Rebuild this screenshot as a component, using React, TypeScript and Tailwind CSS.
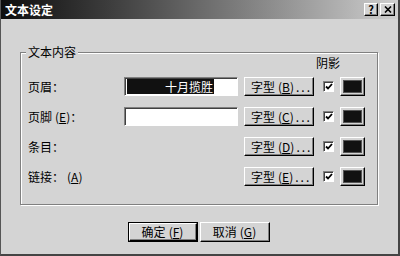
import React from 'react'

const raised = "border-t border-l border-t-white border-l-white border-b border-r border-b-black border-r-black shadow-[inset_-1px_-1px_0_#808080]"
const sunken = "border-t border-l border-t-[#808080] border-l-[#808080] border-b border-r border-b-white border-r-white shadow-[inset_1px_1px_0_#404040]"

const Key = ({ k }: { k: string }) => (
  <span className="ml-[3px]">(<span className="underline">{k}</span>)</span>
)

const Check = () => (
  <div className={`w-[11px] h-[11px] bg-white flex items-center justify-center ${sunken}`}>
    <svg width="8" height="7" viewBox="0 0 8 7">
      <path d="M1 3.5 L3 5.5 L7 1" stroke="#000" strokeWidth="1.8" fill="none" />
    </svg>
  </div>
)

const Swatch = () => (
  <div className={`w-[25px] h-[19px] bg-[#d4d4d4] flex items-center justify-center ${raised}`}>
    <div className="w-[19px] h-[13px] bg-[#111] border border-[#555]" />
  </div>
)

const FontBtn = ({ k }: { k: string }) => (
  <div className={`w-[70px] h-[19px] flex items-center pl-[6px] ${raised}`}>
    字型<Key k={k} /><span className="ml-[2px] tracking-[2px]">...</span>
  </div>
)

type Row = { label: React.ReactNode; input?: 'sel' | 'empty'; k: string }

const rows: Row[] = [
  { label: <>页眉：</>, input: 'sel', k: 'B' },
  { label: <>页脚<Key k="E" />：</>, input: 'empty', k: 'C' },
  { label: <>条目：</>, k: 'D' },
  { label: <>链接：<Key k="A" /></>, k: 'E' },
]

export default function App() {
  return (
    <div
      className="w-[400px] h-[256px] bg-[#d4d4d4] border-l border-l-[#555] border-r-2 border-r-[#444] border-b-2 border-b-[#444] flex flex-col text-[12px] leading-[14px] text-black overflow-hidden"
      style={{ fontFamily: '"Noto Sans CJK SC", "Noto Sans", sans-serif' }}
    >
      {/* title bar */}
      <div className="h-[19px] bg-linear-to-r from-[#0e0e0e] via-[#6a6a6a] to-[#cfcfcf] flex items-center pl-[4px] pr-[3px] shrink-0">
        <span className="text-white font-bold text-[12px]">文本设定</span>
        <div className="ml-auto flex gap-[2px]">
          <div className={`w-[14px] h-[13px] bg-[#d4d4d4] flex items-center justify-center font-bold text-[11px] leading-none ${raised}`}>?</div>
          <div className={`w-[15px] h-[13px] bg-[#d4d4d4] flex items-center justify-center ${raised}`}>
            <svg width="8" height="7" viewBox="0 0 8 7">
              <path d="M1 0.5 L7 6.5 M7 0.5 L1 6.5" stroke="#000" strokeWidth="1.6" />
            </svg>
          </div>
        </div>
      </div>

      {/* group box */}
      <div className="relative ml-[19px] mt-[33px] w-[358px] h-[153px] border border-[#808080] shadow-[1px_1px_0_#fff,inset_1px_1px_0_#fff]">
        <span className="absolute left-[5px] -top-[8px] px-[2px] bg-[#d4d4d4]">文本内容</span>
        <div className="pl-[295px] pt-[3px] h-[17px]">阴影</div>
        <div className="flex flex-col gap-[11px] mt-[7px] pl-[7px]">
          {rows.map((r, i) => (
            <div key={i} className="flex items-center h-[19px]">
              <div className="w-[96px]">{r.label}</div>
              <div className="w-[114px] h-[19px]">
                {r.input && (
                  <div className={`w-full h-full bg-white flex items-center pl-[2px] ${sunken}`}>
                    {r.input === 'sel' && (
                      <span className="w-[87px] h-[15px] bg-[#111] text-white text-right leading-[15px] pr-[1px]">十月揽胜</span>
                    )}
                  </div>
                )}
              </div>
              <div className="ml-[6px]"><FontBtn k={r.k} /></div>
              <div className="ml-[9px]"><Check /></div>
              <div className="ml-[6px]"><Swatch /></div>
            </div>
          ))}
        </div>
      </div>

      {/* dialog buttons */}
      <div className="flex justify-center gap-[2px] mt-[17px] pr-[2px]">
        <div className="border border-black">
          <div className={`w-[68px] h-[18px] flex items-center justify-center ${raised}`}>
            确定<Key k="F" />
          </div>
        </div>
        <div className={`w-[70px] h-[20px] flex items-center justify-center ${raised}`}>
          取消<Key k="G" />
        </div>
      </div>
    </div>
  )
}
